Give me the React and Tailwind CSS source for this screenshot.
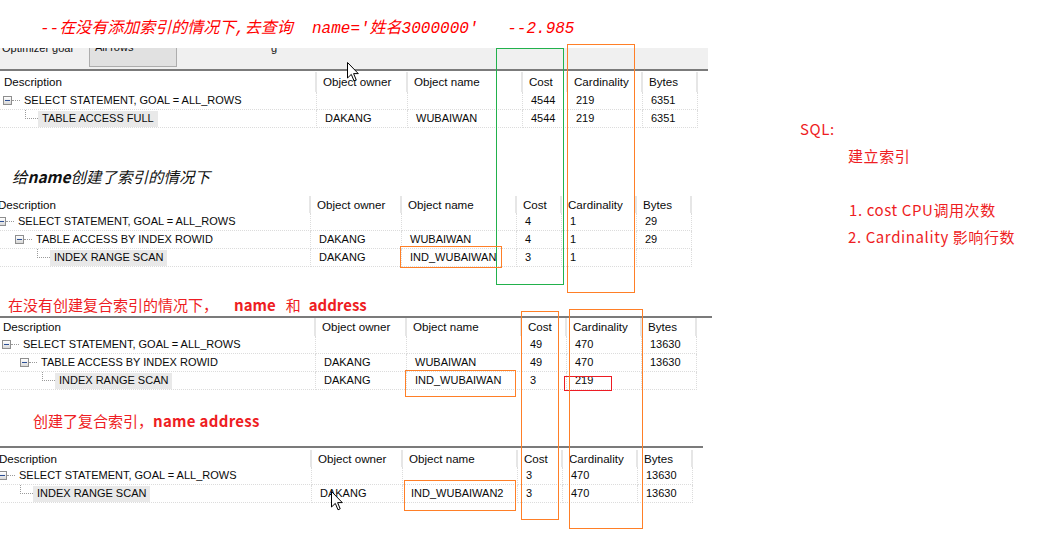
import React from "react";

const GRID = "grid grid-cols-[317px_91px_115px_45px_75px_55px]";
const LEVEL_PAD = ["pl-[3px]", "pl-[21px]", "pl-[39px]"];

function OpenIcon() {
  return (
    <>
      <span className="w-[9px] h-[9px] shrink-0 border border-[#8e8e8e] bg-linear-to-b from-white to-[#d8d8d8] flex items-center justify-center">
        <span className="w-[5px] h-[1px] bg-[#2c4f95]" />
      </span>
      <span className="w-[8px] h-0 shrink-0 border-t border-dotted border-[#9a9a9a]" />
    </>
  );
}

function LeafLine() {
  return <span className="self-start ml-[4px] w-[13px] h-[9px] shrink-0 border-l border-b border-dotted border-[#9a9a9a]" />;
}

function TreeCell({ row }) {
  return (
    <div className={`flex items-center h-[18px] border-b border-r border-dotted border-[#dcdcdc] ${LEVEL_PAD[row.level]}`}>
      {row.open ? <OpenIcon /> : <LeafLine />}
      {row.sel ? (
        <span className="h-[16px] px-[4px] flex items-center bg-[#e9e9e9]">{row.text}</span>
      ) : (
        <span className="pl-[4px]">{row.text}</span>
      )}
    </div>
  );
}

function Cell({ children }) {
  return (
    <div className="h-[18px] flex items-center pl-[8px] border-b border-r border-dotted border-[#dcdcdc] whitespace-nowrap">
      {children}
    </div>
  );
}

function PlanTable({ shift, headH, rows }) {
  const heads = ["Object owner", "Object name", "Cost", "Cardinality", "Bytes"];
  return (
    <div className={`w-[698px] text-[11px] text-[#0a0a0a] font-['Liberation_Sans',Arial,sans-serif] ${shift}`}>
      <div className={`${GRID} ${headH} text-[11.6px]`}>
        <div className="flex items-center pl-[4px] border-r-2 border-[#e6e6e6]">Description</div>
        {heads.map((h) => (
          <div key={h} className="flex items-center pl-[6px] border-r-2 border-[#e6e6e6] whitespace-nowrap">
            {h}
          </div>
        ))}
      </div>
      {rows.map((r, i) => (
        <div key={i} className={GRID}>
          <TreeCell row={r} />
          <Cell>{r.owner}</Cell>
          <Cell>{r.name}</Cell>
          <Cell>{r.cost}</Cell>
          <Cell>{r.card}</Cell>
          <Cell>{r.bytes}</Cell>
        </div>
      ))}
    </div>
  );
}

function Cursor({ className }) {
  return (
    <svg className={className} width="12" height="20" viewBox="0 0 12 20">
      <path d="M0.5 0.5 L0.5 16 L4.3 12.4 L7 18.8 L9.2 17.8 L6.6 11.6 L11.3 11.6 Z" fill="white" stroke="#000" strokeWidth="1" />
    </svg>
  );
}

const root = { level: 0, open: true, text: "SELECT STATEMENT, GOAL = ALL_ROWS" };

const plan1 = [
  { ...root, cost: "4544", card: "219", bytes: "6351" },
  { level: 1, sel: true, text: "TABLE ACCESS FULL", owner: "DAKANG", name: "WUBAIWAN", cost: "4544", card: "219", bytes: "6351" },
];

const plan2 = [
  { ...root, cost: "4", card: "1", bytes: "29" },
  { level: 1, open: true, text: "TABLE ACCESS BY INDEX ROWID", owner: "DAKANG", name: "WUBAIWAN", cost: "4", card: "1", bytes: "29" },
  { level: 2, sel: true, text: "INDEX RANGE SCAN", owner: "DAKANG", name: "IND_WUBAIWAN", cost: "3", card: "1", bytes: "" },
];

const plan3 = [
  { ...root, cost: "49", card: "470", bytes: "13630" },
  { level: 1, open: true, text: "TABLE ACCESS BY INDEX ROWID", owner: "DAKANG", name: "WUBAIWAN", cost: "49", card: "470", bytes: "13630" },
  { level: 2, sel: true, text: "INDEX RANGE SCAN", owner: "DAKANG", name: "IND_WUBAIWAN", cost: "3", card: "219", bytes: "" },
];

const plan4 = [
  { ...root, cost: "3", card: "470", bytes: "13630" },
  { level: 1, sel: true, text: "INDEX RANGE SCAN", owner: "DAKANG", name: "IND_WUBAIWAN2", cost: "3", card: "470", bytes: "13630" },
];

const CJK = "font-['Noto_Sans_CJK_SC',sans-serif]";

export default function App() {
  return (
    <div className="relative w-[1050px] h-[538px] overflow-hidden bg-white flex">
      {/* left: pasted plans */}
      <div className="w-[800px] shrink-0 flex flex-col">
        <p className="mt-[19px] ml-[40px] leading-[20px] text-[16px] italic text-[#ff0000] whitespace-pre font-['Liberation_Mono','Noto_Sans_CJK_SC',monospace]">
          --在没有添加索引的情况下,去查询  name='姓名3000000'   --2.985
        </p>

        {/* toolbar of the first plan, cut at the top */}
        <div className="mt-[9px] w-[708px] h-[21px] overflow-hidden bg-[#f0f0f0] flex items-start text-[11px] text-[#111] font-['Liberation_Sans',Arial,sans-serif]">
          <span className="ml-[2px] mt-[-6px] leading-[13px]">Optimizer goal</span>
          <span className="ml-[16px] w-[88px] h-[19px] border border-t-0 border-[#adadad] bg-[#e1e1e1] leading-[13px] pl-[5px]">
            <span className="block mt-[-7px]">All rows</span>
          </span>
          <span className="ml-[94px] mt-[-6px] leading-[13px]">g</span>
        </div>
        <div className="w-[708px] h-[2px] bg-[#7b7b7b]" />
        <div className="mt-[1px]">
          <PlanTable shift="" headH="h-[20px]" rows={plan1} />
        </div>

        <p className={`mt-[38px] ml-[12px] leading-[20px] text-[15.5px] italic text-[#111] ${CJK}`}>
          给<b>name</b>创建了索引的情况下
        </p>
        <div className="mt-[10px]">
          <PlanTable shift="ml-[-6px]" headH="h-[17px]" rows={plan2} />
        </div>

        <p className={`mt-[28px] ml-[8px] leading-[20px] text-[15px] text-[#ee1d23] whitespace-nowrap ${CJK}`}>
          在没有创建复合索引的情况下，
          <b className="ml-[16px]">name</b>
          <span className="ml-[10px]">和</span>
          <b className="ml-[8px]">address</b>
        </p>
        <div className="mt-[1px] w-[712px] h-[2px] bg-[#7b7b7b]" />
        <PlanTable shift="ml-[-1px]" headH="h-[18px]" rows={plan3} />

        <p className={`mt-[21px] ml-[33px] leading-[20px] text-[15px] text-[#ee1d23] whitespace-nowrap ${CJK}`}>
          创建了复合索引，<b className="tracking-[0.3px]">name address</b>
        </p>
        <div className="mt-[15px] w-[703px] h-[2px] bg-[#7b7b7b]" />
        <div className="mt-[2px]">
          <PlanTable shift="ml-[-5px]" headH="h-[17px]" rows={plan4} />
        </div>
      </div>

      {/* right: notes */}
      <div className={`flex-1 pt-[115px] text-[15px] leading-[27px] tracking-[0.6px] text-[#ee1d23] ${CJK}`}>
        <div>SQL:</div>
        <div className="pl-[48px]">建立索引</div>
        <div className="h-[27px]" />
        <div className="pl-[49px]">1. cost CPU调用次数</div>
        <div className="pl-[48px]">2. Cardinality 影响行数</div>
      </div>

      {/* annotation boxes drawn over the plans */}
      <div className="absolute left-[496px] top-[48px] w-[68px] h-[237px] border border-[#22b14c]" />
      <div className="absolute left-[567px] top-[44px] w-[68px] h-[249px] border border-[#ff7f27]" />
      <div className="absolute left-[400px] top-[246px] w-[102px] h-[22px] border border-[#ff7f27]" />
      <div className="absolute left-[405px] top-[370px] w-[111px] h-[27px] border border-[#ff7f27]" />
      <div className="absolute left-[564px] top-[376px] w-[48px] h-[15px] border border-[#ed1c24]" />
      <div className="absolute left-[521px] top-[311px] w-[38px] h-[209px] border border-[#ff7f27]" />
      <div className="absolute left-[569px] top-[309px] w-[74px] h-[220px] border border-[#ff7f27]" />
      <div className="absolute left-[404px] top-[480px] w-[112px] h-[31px] border border-[#ff7f27]" />

      <Cursor className="absolute left-[347px] top-[62px]" />
      <Cursor className="absolute left-[331px] top-[491px]" />
    </div>
  );
}
